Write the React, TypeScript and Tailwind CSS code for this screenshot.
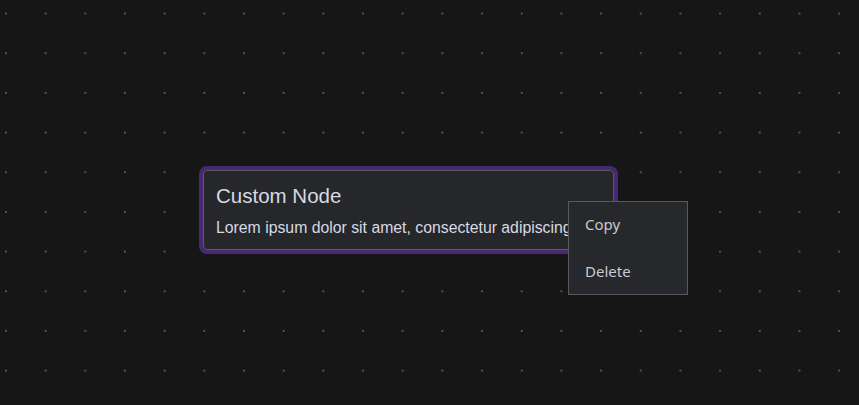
import React from 'react';

function DotGrid() {
  return (
    <svg className="absolute inset-0 h-full w-full" aria-hidden="true">
      <defs>
        <pattern id="dots" x="5" y="12.6" width="39.675" height="39.675" patternUnits="userSpaceOnUse">
          <rect x="0" y="0" width="1.8" height="1.8" fill="#5e5e61" />
        </pattern>
      </defs>
      <rect width="100%" height="100%" fill="url(#dots)" />
    </svg>
  );
}

function CustomNode() {
  return (
    <div className="absolute left-[199px] top-[166px] h-[88px] w-[419px] rounded-[8px] border-4 border-[#4b2a80]/90">
      <div className="flex h-full w-full flex-col overflow-hidden rounded-[4px] border border-[#5c5d62] bg-[#26272b] pl-[12px] pt-[12px] font-['Liberation_Sans',Arial,sans-serif] text-[#d6dae2]">
        <div className="text-[20.5px] leading-[26px]">Custom Node</div>
        <div className="mt-[9px] whitespace-nowrap text-[15.8px] leading-[20px]">
          Lorem ipsum dolor sit amet, consectetur adipiscing elit.
        </div>
      </div>
    </div>
  );
}

function ContextMenu() {
  return (
    <div className="absolute left-[568px] top-[201px] flex h-[94px] w-[120px] flex-col border border-[#58595e] bg-[#27282c] font-['Noto_Sans','Open_Sans',sans-serif] text-[15px] text-[#c9cacd]">
      <button type="button" className="flex h-[46px] items-center pb-[2px] pl-[16px] text-left">
        Copy
      </button>
      <button type="button" className="flex h-[46px] items-center pl-[16px] text-left">
        Delete
      </button>
    </div>
  );
}

export default function App() {
  return (
    <div className="relative h-[405px] w-[859px] overflow-hidden bg-[#161616]">
      <DotGrid />
      <CustomNode />
      <ContextMenu />
    </div>
  );
}
